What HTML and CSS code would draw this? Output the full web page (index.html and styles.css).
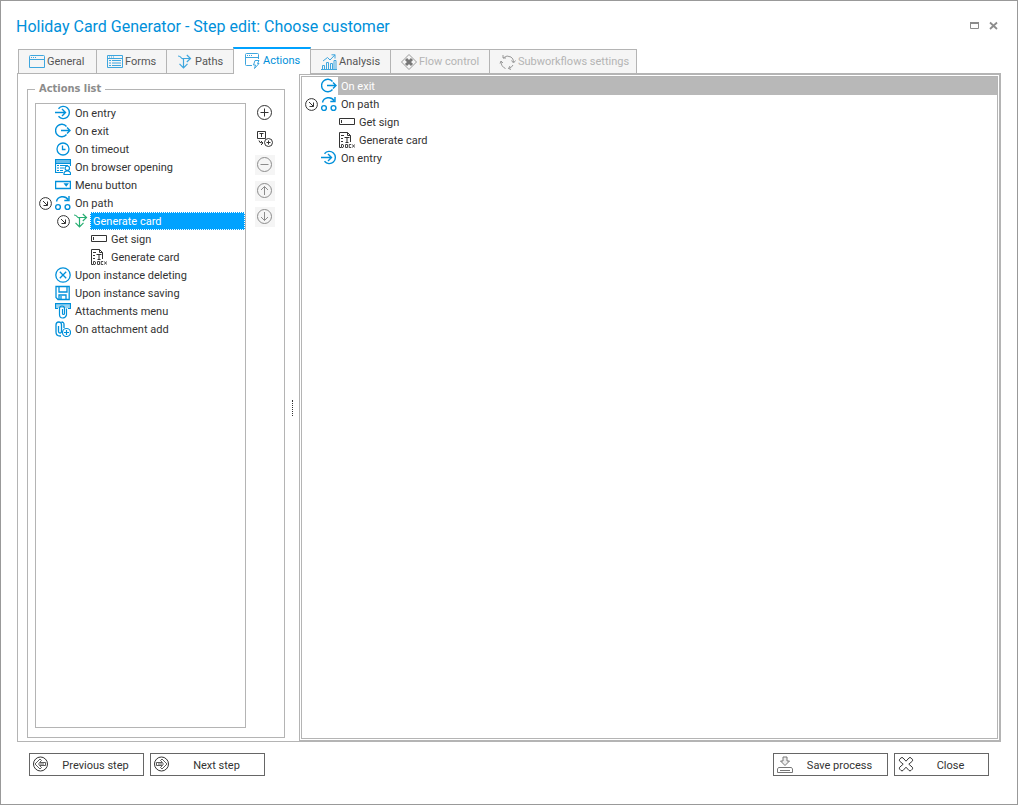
FILE: index.html
```html
<!DOCTYPE html>
<html lang="en">
<head>
    <meta charset="UTF-8">
    <meta name="viewport" content="width=device-width, initial-scale=1.0">
    <title>Holiday Card Generator - Step edit: Choose customer</title>
    <link rel="stylesheet" href="styles.css">
</head>
<body>
    <!-- shared icons -->
    <svg class="sprite" aria-hidden="true">
        <symbol id="i-entry" viewBox="0 0 16 16"><path d="M3.5 3.7A6.1 6.1 0 1 1 3.5 11.3" stroke-width="1.4"/><path d="M0 7.5H10.5M7 4L10.5 7.5L7 11" stroke-width="1.4"/></symbol>
        <symbol id="i-exit" viewBox="0 0 16 16"><path d="M11.5 3.5A6.2 6.2 0 1 0 11.5 11.5" stroke-width="1.4"/><path d="M6 7.5H15M12 4.5L15 7.5L12 10.5" stroke-width="1.4"/></symbol>
        <symbol id="i-clock" viewBox="0 0 16 16"><circle cx="8" cy="8" r="6" stroke-width="1.3"/><path d="M7.5 4.5V8.5H10.5" stroke-width="1.3"/></symbol>
        <symbol id="i-browser" viewBox="0 0 16 16"><path d="M8 13.5H.5V.5H15.5V7M.5 4.5H15.5" stroke-width="1.2"/><path d="M0 2.5H16" stroke-width="3" opacity=".6"/><path d="M2 6.5H4M5 6.5H13M2 9H4M5 9H9M2 11.5H4M5 11.5H8"/><circle cx="12.3" cy="9.2" r="2.2" fill="#fff" stroke-width="1.2"/><path d="M9 15.5V14Q9.5 12 12.3 12T15.5 14V15.5Z" fill="#fff" stroke-width="1.2"/></symbol>
        <symbol id="i-menu" viewBox="0 0 16 16"><path d="M.6 4.5H15.4V11.5H.6Z" stroke-width="1.3"/><path d="M8.5 6.3H14L11.2 9.8Z" fill="currentColor" stroke="none"/></symbol>
        <symbol id="i-path" viewBox="0 0 16 16"><path d="M1.5 6.5A6.3 6 0 0 1 13 4.5M14 1V5.5H9.3" stroke-width="1.4"/><circle cx="3" cy="12" r="2.4" stroke-width="1.4"/><circle cx="12.5" cy="12" r="2.4" stroke-width="1.4"/></symbol>
        <symbol id="i-expander" viewBox="0 0 16 16"><circle cx="8.5" cy="8.5" r="5.9"/><path d="M6 6L10.3 10.3M10.5 6.5V10.5H6.5"/></symbol>
        <symbol id="i-branch" viewBox="0 0 16 16"><path d="M1 2Q3 2 4 3.5T6 4.5H13M9.8 1L13.5 4.5L9.8 8M6.5 4.5V13.5M2.5 9.8L6.5 13.8L10.5 9.8" stroke-width="1.2"/></symbol>
        <symbol id="i-field" viewBox="0 0 16 16"><path d="M.5 4.5H15.5V10.5H.5ZM2.5 6V9"/></symbol>
        <symbol id="i-docx" viewBox="0 0 16 16"><path d="M2 15.5H.5V.5H8.5L11.5 3.5V10M8.5 .5V3.5H11.5M2 3.5H5M2 6.5H4M2 9.5H4M5.5 5.5H10.5M8 5.5V10.5M6.5 10.5H9.5"/><path d="M2.5 12.5V15.5H4L4.7 14L4 12.5ZM6.5 12.5H8.5V15.5H6.5ZM12 12.5H10.2V15.5H12M13 12.3L16 15.7M16 12.3L13 15.7" stroke-width=".9"/></symbol>
        <symbol id="i-delete" viewBox="0 0 16 16"><circle cx="8" cy="8" r="7.2" stroke-width="1.3"/><path d="M4.8 4.8L11.2 11.2M11.2 4.8L4.8 11.2" stroke-width="1.3"/></symbol>
        <symbol id="i-save" viewBox="0 0 16 16"><path d="M1 1.5H14.2V14.5H3L1 12.5ZM4 1.5V7H12V1.5M4 14.5V10H11V14.5M6 11V14" stroke-width="1.3"/></symbol>
        <symbol id="i-attach" viewBox="0 0 16 16"><path d="M3 5.5H.5V.7H15.5V5.5H13" stroke-width="1.2"/><path d="M0 3H16" stroke-width="4" opacity=".4"/><path d="M7.5 6V10.5Q7.5 11.5 8.5 11.5T9.5 10.5V5.5Q9.5 3 7 3T4.5 5.5V11.5Q4.5 15 7.5 15T11.5 12V5.5" stroke-width="1.2"/></symbol>
        <symbol id="i-attachadd" viewBox="0 0 16 16"><path d="M3.5 5V10.5Q3.5 12 5 12T6.5 10.5V4Q6.5 1 3.8 1T1 4V11Q1 15 5 15H6M9 7V3.5Q9 1 6.5 1" stroke-width="1.3"/><circle cx="11.5" cy="11.5" r="4" stroke-width="1.2"/><path d="M9 11.5H14M11.5 9V14" stroke-width="1.2"/></symbol>
    </svg>

    <header class="titlebar">
        <h1>Holiday Card Generator - Step edit: Choose customer</h1>
        <div class="window-buttons">
            <button type="button" aria-label="Maximize"><svg width="10" height="10" viewBox="0 0 10 10"><path d="M.5 2V7.5H8.5V2"/><path d="M0 2H9" stroke-width="2"/></svg></button>
            <button type="button" aria-label="Close window"><svg width="10" height="10" viewBox="0 0 10 10"><path d="M1 1.5L8 8M8 1.5L1 8" stroke-width="1.8"/></svg></button>
        </div>
    </header>

    <nav class="tabs" role="tablist">
        <button type="button" class="tab tab-general" role="tab"><svg viewBox="0 0 16 16"><path d="M.5 2.5Q.5 1.5 1.5 1.5H14.5Q15.5 1.5 15.5 2.5V13.5H.5ZM.5 5.5H15.5"/><path d="M2 3.5H3M4 3.5H5M6 3.5H7"/></svg>General</button>
        <button type="button" class="tab tab-forms" role="tab"><svg viewBox="0 0 16 16"><path d="M.5 1.5H15.5V13.5H.5ZM.5 4.5H15.5M2 3H3M4 3H5M6 3H7M2 6.5H4M5 6.5H14M2 9H4M5 9H14M2 11.5H4M5 11.5H14"/></svg>Forms</button>
        <button type="button" class="tab tab-paths" role="tab"><svg viewBox="0 0 16 16"><use href="#i-branch"/></svg>Paths</button>
        <button type="button" class="tab tab-actions active" role="tab" aria-selected="true"><svg viewBox="0 0 16 16"><path d="M7 12.5H1.5Q.5 12.5 .5 11.5V1.5Q.5 .5 1.5 .5H12.5Q13.5 .5 13.5 1.5V6M.5 4.5H13.5M2 2.5H3M4 2.5H5M6 2.5H7"/><path d="M10 7.5H14L12.5 10.5H14L9.5 15.5L10.5 12H8.5Z"/></svg>Actions</button>
        <button type="button" class="tab tab-analysis" role="tab"><svg viewBox="0 0 16 16"><path d="M0 15.5H16M1.5 15V11.5H3.5V15M5.5 15V8.5H7.5V15M9.5 15V9.5H11.5V15M13 15V6.5H15V15"/><path d="M2 7L6.5 3.5L9 6L14 .8M10.5 .8H14V4.5"/></svg>Analysis</button>
        <button type="button" class="tab tab-flow" role="tab" disabled><svg viewBox="0 0 16 16"><path d="M8 .5L15.5 8L8 15.5L.5 8Z"/><path d="M5 5L11 11M11 5L5 11" stroke="#777" stroke-width="3"/></svg>Flow control</button>
        <button type="button" class="tab tab-sub" role="tab" disabled><svg viewBox="0 0 16 16"><path d="M3 1V4H6M3 4Q7 .5 11 3Q13.5 4.5 13.5 8M11.5 6.5L13.5 9L15.5 6.5M13 11Q11.5 14 8.5 14.5M11 15.5L8.5 14.5L10 12M5.5 14.5Q1 12.5 1 7.5M0 9.5L1 7L3 9"/></svg>Subworkflows settings</button>
    </nav>

    <main class="panel">
        <section class="left">
            <fieldset class="group">
                <legend>Actions list</legend>
                <div class="group-body">
                    <ul class="tree">
                        <li><div class="row"><svg class="icon"><use href="#i-entry"/></svg><span class="label">On entry</span></div></li>
                        <li><div class="row"><svg class="icon"><use href="#i-exit"/></svg><span class="label">On exit</span></div></li>
                        <li><div class="row"><svg class="icon"><use href="#i-clock"/></svg><span class="label">On timeout</span></div></li>
                        <li><div class="row"><svg class="icon"><use href="#i-browser"/></svg><span class="label">On browser opening</span></div></li>
                        <li><div class="row"><svg class="icon"><use href="#i-menu"/></svg><span class="label">Menu button</span></div></li>
                        <li>
                            <div class="row"><button type="button" class="expander" aria-label="Collapse On path"><svg><use href="#i-expander"/></svg></button><svg class="icon"><use href="#i-path"/></svg><span class="label">On path</span></div>
                            <ul>
                                <li>
                                    <div class="row selected"><button type="button" class="expander" aria-label="Collapse Generate card"><svg><use href="#i-expander"/></svg></button><svg class="icon green"><use href="#i-branch"/></svg><span class="label">Generate card</span></div>
                                    <ul>
                                        <li><div class="row"><svg class="icon dark"><use href="#i-field"/></svg><span class="label">Get sign</span></div></li>
                                        <li><div class="row"><svg class="icon dark"><use href="#i-docx"/></svg><span class="label">Generate card</span></div></li>
                                    </ul>
                                </li>
                            </ul>
                        </li>
                        <li><div class="row"><svg class="icon"><use href="#i-delete"/></svg><span class="label">Upon instance deleting</span></div></li>
                        <li><div class="row"><svg class="icon"><use href="#i-save"/></svg><span class="label">Upon instance saving</span></div></li>
                        <li><div class="row"><svg class="icon"><use href="#i-attach"/></svg><span class="label">Attachments menu</span></div></li>
                        <li><div class="row"><svg class="icon"><use href="#i-attachadd"/></svg><span class="label">On attachment add</span></div></li>
                    </ul>
                    <div class="tools">
                        <button type="button" aria-label="Add"><svg viewBox="0 0 16 16"><circle cx="7.5" cy="7.5" r="7"/><path d="M3.5 7.5H11.5M7.5 3.5V11.5"/></svg></button>
                        <button type="button" aria-label="Add from template"><svg viewBox="0 0 16 16"><path d="M8.5 7.5H.5V.5H8.5ZM2.5 2.5H6.5M4.5 2.5V6M2 9.5Q2 12 5.5 12M4 10L6 12L4 14"/><circle cx="11.5" cy="11.5" r="4"/><path d="M9.5 11.5H13.5M11.5 9.5V13.5"/></svg></button>
                        <button type="button" aria-label="Remove" disabled><svg viewBox="0 0 16 16"><circle cx="7.5" cy="7.5" r="7"/><path d="M3.5 7.5H11.5"/></svg></button>
                        <button type="button" aria-label="Move up" disabled><svg viewBox="0 0 16 16"><circle cx="7.5" cy="7.5" r="7"/><path d="M7.5 12V3.5M4 7L7.5 3.5L11 7"/></svg></button>
                        <button type="button" aria-label="Move down" disabled><svg viewBox="0 0 16 16"><circle cx="7.5" cy="7.5" r="7"/><path d="M7.5 3V11.5M4 8L7.5 11.5L11 8"/></svg></button>
                    </div>
                </div>
            </fieldset>
        </section>
        <div class="splitter"><span></span></div>
        <section class="right">
            <ul class="tree">
                <li><div class="row inactive"><svg class="icon"><use href="#i-exit"/></svg><span class="label">On exit</span></div></li>
                <li>
                    <div class="row"><button type="button" class="expander" aria-label="Collapse On path"><svg><use href="#i-expander"/></svg></button><svg class="icon"><use href="#i-path"/></svg><span class="label">On path</span></div>
                    <ul>
                        <li><div class="row"><svg class="icon dark"><use href="#i-field"/></svg><span class="label">Get sign</span></div></li>
                        <li><div class="row"><svg class="icon dark"><use href="#i-docx"/></svg><span class="label">Generate card</span></div></li>
                    </ul>
                </li>
                <li><div class="row"><svg class="icon"><use href="#i-entry"/></svg><span class="label">On entry</span></div></li>
            </ul>
        </section>
    </main>

    <footer class="footer">
        <button type="button" class="btn"><svg viewBox="0 0 16 16"><circle cx="7.5" cy="7" r="7"/><path d="M2 7L7 2L8.5 3.5L6.5 5.5H12.5V8.5H6.5L8.5 10.5L7 12ZM5 7H11" stroke-width=".8"/></svg><span>Previous step</span></button>
        <button type="button" class="btn"><svg viewBox="0 0 16 16"><circle cx="7.5" cy="7" r="7"/><path d="M13 7L8 2L6.5 3.5L8.5 5.5H2.5V8.5H8.5L6.5 10.5L8 12ZM10 7H4" stroke-width=".8"/></svg><span>Next step</span></button>
        <button type="button" class="btn save"><svg viewBox="0 0 16 16"><path d="M6 0V4H3.5L8 8.5L12.5 4H10V0Z" fill="#eee"/><path d="M1.5 10.5H14.5L15.5 12V15.5H.5V12ZM3 13.5H13"/></svg><span>Save process</span></button>
        <button type="button" class="btn close"><svg viewBox="0 0 16 16"><path d="M8 4.2L11 .9Q12 .1 13 .9L14.3 2.2Q15 3.2 14.3 4.2L10.8 7.2L14.3 10.2Q15 11.2 14.3 12.2L13 13.5Q12 14.3 11 13.5L8 10.2L5 13.5Q4 14.3 3 13.5L1.7 12.2Q1 11.2 1.7 10.2L5.2 7.2L1.7 4.2Q1 3.2 1.7 2.2L3 .9Q4 .1 5 .9Z"/></svg><span>Close</span></button>
    </footer>
</body>
</html>
```

FILE: styles.css
```css
*{box-sizing:border-box}
body{margin:0;min-height:100vh;display:flex;flex-direction:column;border:1px solid #999;background:#fff;color:#333;font:11px/18px Tahoma,Roboto,"Noto Sans",sans-serif}
button{font:inherit;color:inherit;background:none;border:0;padding:0;margin:0}
svg{fill:none;stroke:currentColor;flex:none;overflow:visible}
ul{list-style:none;margin:0;padding:0}
.sprite{position:absolute;width:0;height:0}

/* title */
.titlebar{display:flex;justify-content:space-between;align-items:center;height:46px;padding:4px 18px 0 15px}
h1{margin:0;padding-top:2px;font:400 16px/24px Tahoma,Roboto,"Noto Sans",sans-serif;color:#0090da}
.window-buttons{display:flex;gap:9px;color:#8c8c8c}
.window-buttons button,.window-buttons svg{display:block;width:10px;height:10px}

/* tabs */
.tabs{display:flex;align-items:flex-end;height:26px;padding-left:17px}
.tab{display:flex;align-items:center;gap:2px;height:24px;padding:0 10px;margin-right:-1px;border:1px solid #b4b4b4;border-bottom:0;background:#f5f5f5;color:#555;white-space:nowrap}
.tab svg{width:16px;height:16px;color:#3ea6de}
.tab:disabled{color:#b4b4b4}
.tab:disabled svg{color:#999}
.tab.active{height:27px;margin-bottom:-1px;padding:0 10px 2px 11px;border-top:2px solid #00a2ff;background:#fff;color:#0090da;position:relative}
.tab-general{width:79px}
.tab-forms{width:71px}
.tab-paths{width:68px}
.tab-actions{width:78px}
.tab-analysis{width:81px}
.tab-flow{width:100px}
.tab-sub{width:148px}

/* content */
.panel{flex:1;display:flex;margin:0 16px;border:1px solid #b4b4b4}
.left{flex:none;width:267px;padding:6px 0 3px 9px;display:flex}
.group{flex:1;min-width:0;display:flex;flex-direction:column;margin:0;padding:0 9px 9px 7px;border:1px solid #b4b4b4}
.group legend{padding:0 4px;font-family:Tahoma,"DejaVu Sans Condensed",sans-serif;font-weight:bold;color:#8c8c8c}
.group-body{flex:1;display:flex;gap:9px;padding-top:5px;height:100%}
.group .tree{flex:1;border:1px solid #b4b4b4}
.tools{display:flex;flex-direction:column;gap:6px}
.tools button{width:20px;height:20px;padding:2px;color:#333}
.tools button:disabled{background:#f5f5f5;color:#8c8c8c}
.tools svg{display:block;width:16px;height:16px}
.splitter{flex:none;width:14px;display:flex;align-items:center;justify-content:center}
.splitter span{height:16px;border-left:1px dotted #333}
.right{flex:1;padding:1px;border:1px solid #b4b4b4;display:flex}
.right .tree{flex:1;border:1px solid #b4b4b4}

/* tree */
.tree ul{padding-left:18px}
.row{display:flex;align-items:center;height:18px;padding-left:18px}
.icon{width:16px;height:16px;margin:0 1px;color:#0090da}
.icon.dark{color:#333}
.icon.green{color:#27ae72}
.expander{width:18px;height:18px;margin-left:-18px;padding:1px}
.expander svg{display:block;width:16px;height:16px}
.label{flex:1;padding:2px 0 0 3px;line-height:16px;white-space:nowrap}
.selected .label{background:#00a2ff;color:#fff;outline:1px dotted #fff;outline-offset:-1px}
.inactive .label{background:#b8b8b8;color:#fff}

/* bottom buttons */
.footer{display:flex;gap:6px;padding:11px 28px 28px}
.btn{display:flex;align-items:center;width:115px;height:23px;padding:0 3px;border:1px solid #666}
.btn svg{width:16px;height:16px}
.btn span{flex:1;padding:2px 0 0 2px;text-align:center}
.btn.save{margin-left:auto}
.btn.save svg{color:#777}
.btn.close{width:95px}
```
